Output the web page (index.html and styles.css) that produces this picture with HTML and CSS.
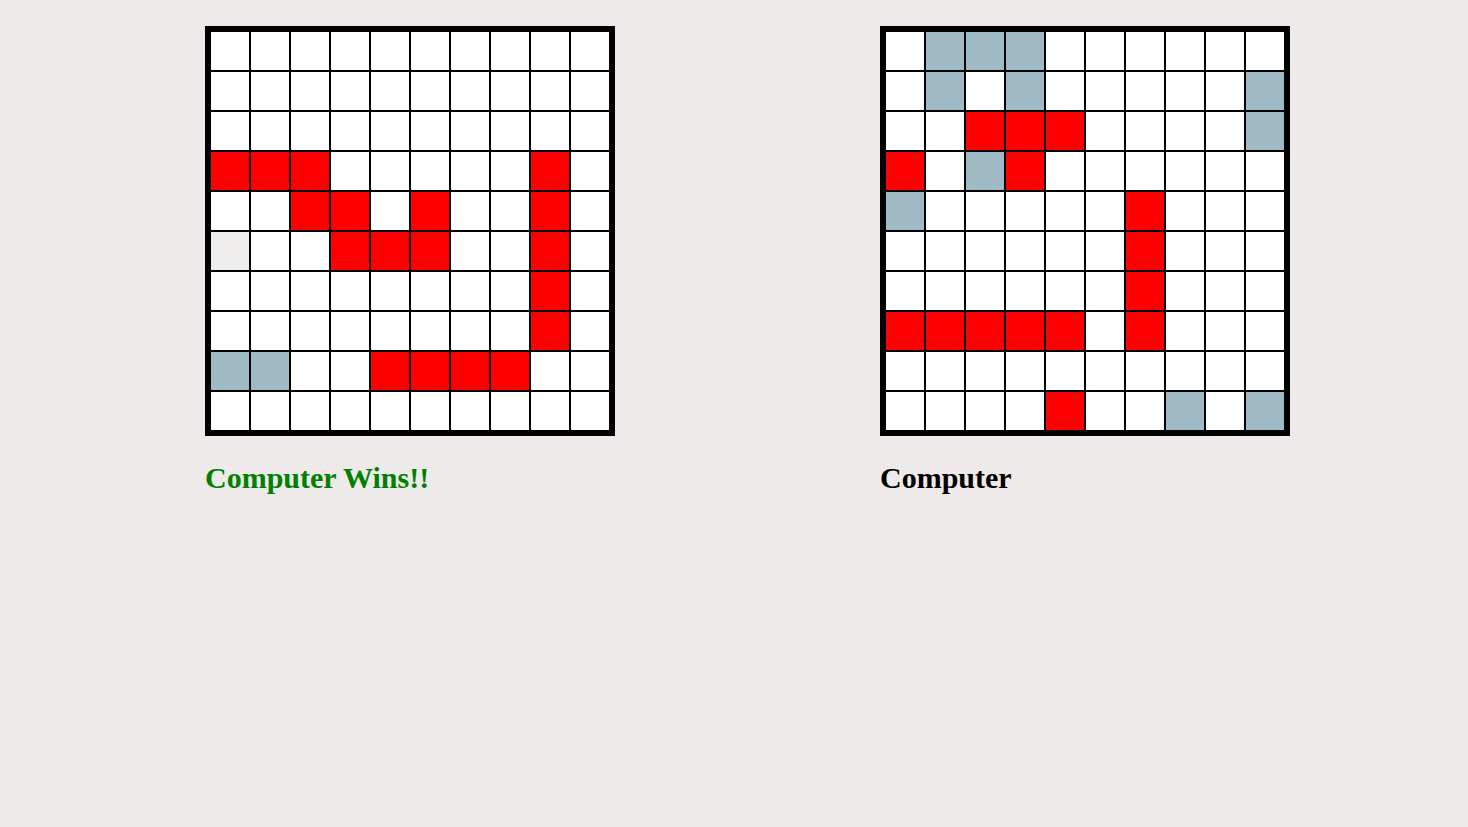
FILE: index.html
```html
<!DOCTYPE html>
<html>
<head>
<meta charset="utf-8">
<link rel="stylesheet" href="styles.css">
</head>
<body>
<div class="page">
  <div class="player">
    <div class="board">
      <div></div><div></div><div></div><div></div><div></div><div></div><div></div><div></div><div></div><div></div>
      <div></div><div></div><div></div><div></div><div></div><div></div><div></div><div></div><div></div><div></div>
      <div></div><div></div><div></div><div></div><div></div><div></div><div></div><div></div><div></div><div></div>
      <div class="r"></div><div class="r"></div><div class="r"></div><div></div><div></div><div></div><div></div><div></div><div class="r"></div><div></div>
      <div></div><div></div><div class="r"></div><div class="r"></div><div></div><div class="r"></div><div></div><div></div><div class="r"></div><div></div>
      <div class="g"></div><div></div><div></div><div class="r"></div><div class="r"></div><div class="r"></div><div></div><div></div><div class="r"></div><div></div>
      <div></div><div></div><div></div><div></div><div></div><div></div><div></div><div></div><div class="r"></div><div></div>
      <div></div><div></div><div></div><div></div><div></div><div></div><div></div><div></div><div class="r"></div><div></div>
      <div class="b"></div><div class="b"></div><div></div><div></div><div class="r"></div><div class="r"></div><div class="r"></div><div class="r"></div><div></div><div></div>
      <div></div><div></div><div></div><div></div><div></div><div></div><div></div><div></div><div></div><div></div>
    </div>
    <div class="label win">Computer Wins!!</div>
  </div>
  <div class="player">
    <div class="board">
      <div></div><div class="b"></div><div class="b"></div><div class="b"></div><div></div><div></div><div></div><div></div><div></div><div></div>
      <div></div><div class="b"></div><div></div><div class="b"></div><div></div><div></div><div></div><div></div><div></div><div class="b"></div>
      <div></div><div></div><div class="r"></div><div class="r"></div><div class="r"></div><div></div><div></div><div></div><div></div><div class="b"></div>
      <div class="r"></div><div></div><div class="b"></div><div class="r"></div><div></div><div></div><div></div><div></div><div></div><div></div>
      <div class="b"></div><div></div><div></div><div></div><div></div><div></div><div class="r"></div><div></div><div></div><div></div>
      <div></div><div></div><div></div><div></div><div></div><div></div><div class="r"></div><div></div><div></div><div></div>
      <div></div><div></div><div></div><div></div><div></div><div></div><div class="r"></div><div></div><div></div><div></div>
      <div class="r"></div><div class="r"></div><div class="r"></div><div class="r"></div><div class="r"></div><div></div><div class="r"></div><div></div><div></div><div></div>
      <div></div><div></div><div></div><div></div><div></div><div></div><div></div><div></div><div></div><div></div>
      <div></div><div></div><div></div><div></div><div class="r"></div><div></div><div></div><div class="b"></div><div></div><div class="b"></div>
    </div>
    <div class="label">Computer</div>
  </div>
</div>
</body>
</html>
```
FILE: styles.css
```css
html, body {
  margin: 0;
  padding: 0;
  background: #eeeae9;
}
.page {
  display: flex;
  gap: 265px;
  padding: 26px 0 0 205px;
}
.player {
  display: flex;
  flex-direction: column;
}
.board {
  display: grid;
  grid-template-columns: repeat(10, 38px);
  grid-auto-rows: 38px;
  gap: 2px;
  background: #000;
  border: 6px solid #000;
}
.board > div {
  background: #fff;
}
.board > .r { background: #ff0000; }
.board > .b { background: #9fbac5; }
.board > .g { background: #efeeec; }
.label {
  font-family: "Liberation Serif", "Times New Roman", serif;
  font-weight: bold;
  font-size: 30px;
  line-height: 34px;
  margin-top: 25px;
  color: #000;
}
.label.win {
  color: #008000;
}
```
